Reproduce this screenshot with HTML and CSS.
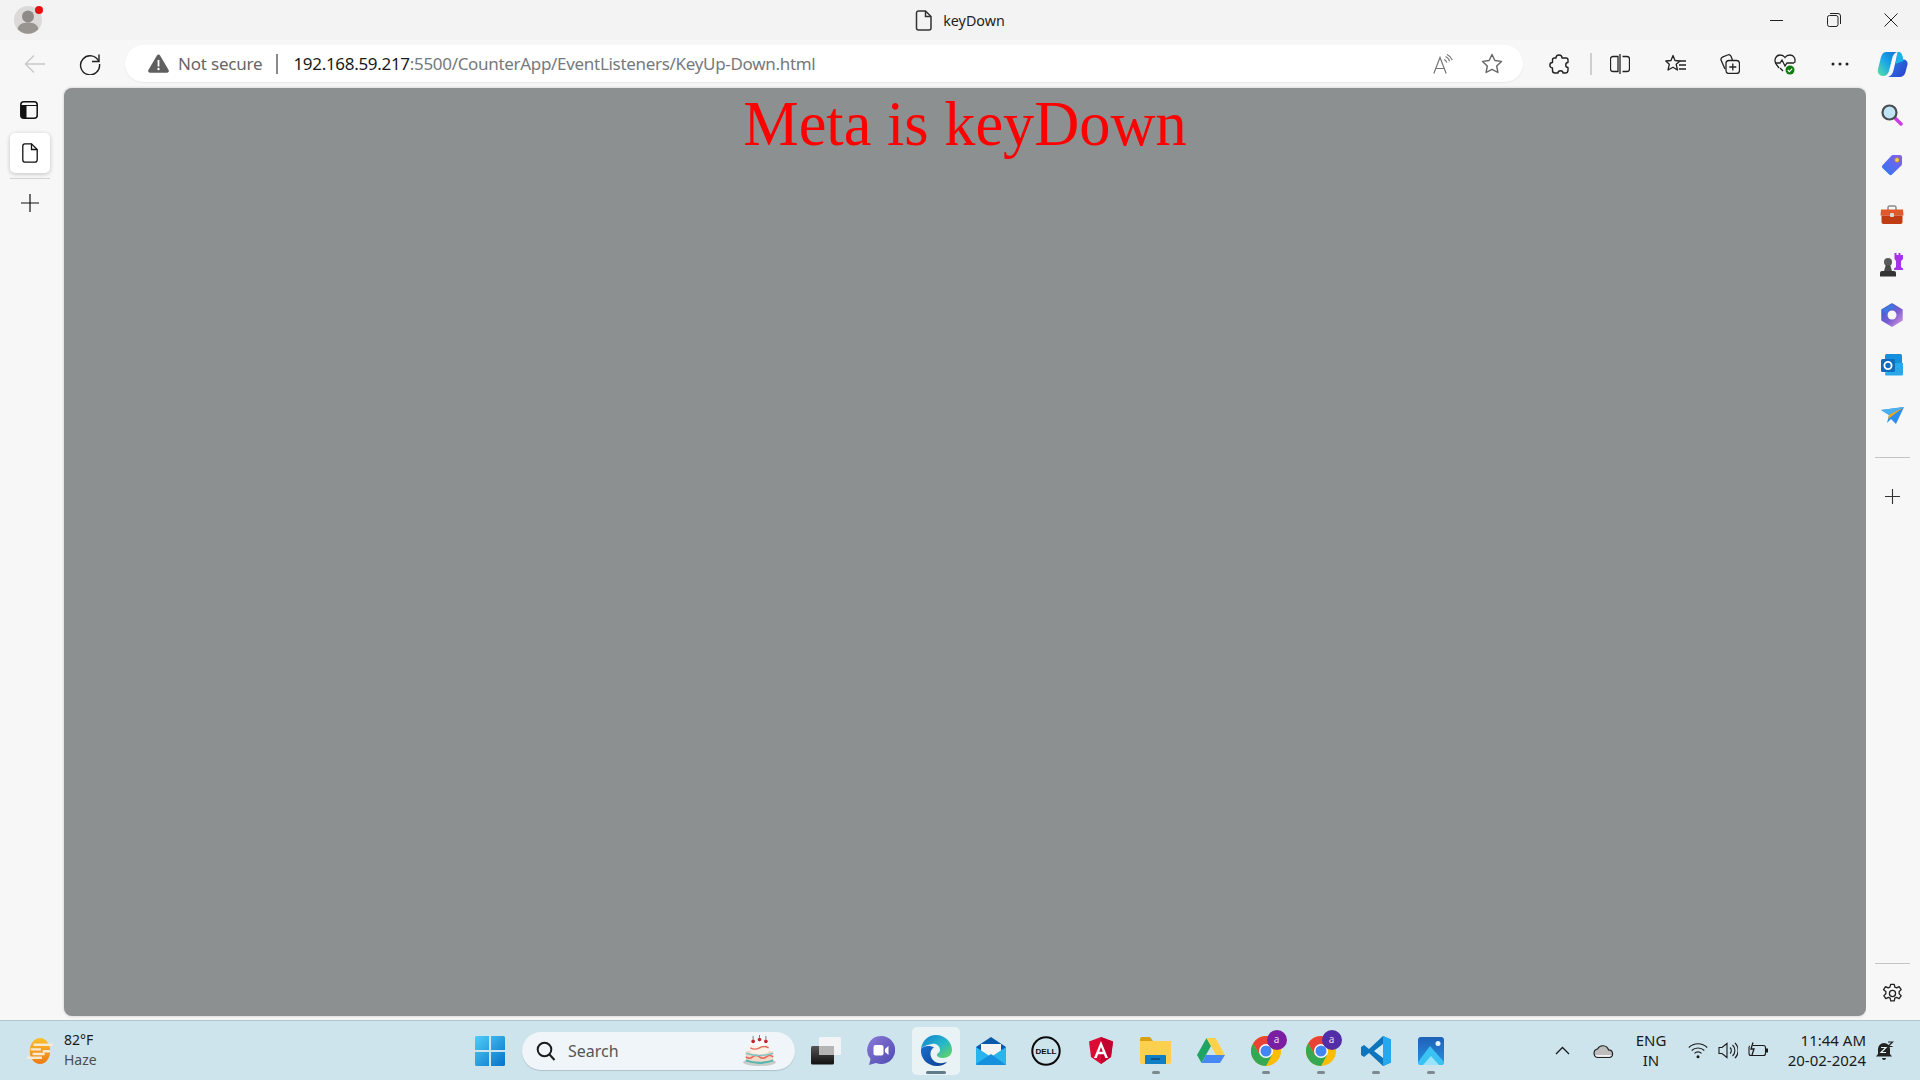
FILE: index.html
```html
<!DOCTYPE html>
<html lang="en">
<head>
<meta charset="utf-8">
<title>keyDown</title>
<link rel="stylesheet" href="styles.css">
</head>
<body>
<div class="window">
  <header class="titlebar">
    <div class="avatar">
      <svg width="28" height="28" viewBox="0 0 28 28"><circle cx="14" cy="14" r="14" fill="#dcdad8"/><circle cx="14" cy="10.500" r="6" fill="#8d8a87"/><path d="M3.500 23c1-4.500 5-6.500 10.500-6.500S23.500 18.500 24.500 23a14 14 0 0 1-21 0Z" fill="#98948f"/></svg>
      <span class="avatar-dot"></span>
    </div>
    <div class="title">
      <svg class="icon" width="18" height="21" viewBox="0 0 18 21" fill="none" stroke="#333" stroke-width="1.500"><path d="M3.500 1h7L16 6.500V18a2 2 0 0 1-2 2H3.500a2 2 0 0 1-2-2V3a2 2 0 0 1 2-2Z"/><path d="M10.500 1v5.500H16"/></svg>
      <span>keyDown</span>
    </div>
    <div class="winctl">
      <button class="winbtn"><svg width="14" height="14" viewBox="0 0 14 14" stroke="#222" fill="none"><path d="M0 7.500h13"/></svg></button>
      <button class="winbtn"><svg width="14" height="14" viewBox="0 0 14 14" stroke="#222" fill="none"><rect x=".5" y="2.500" width="10.500" height="11" rx="2"/><path d="M3 .5h8a2.500 2.500 0 0 1 2.500 2.500v8"/></svg></button>
      <button class="winbtn"><svg width="14" height="14" viewBox="0 0 14 14" stroke="#222" fill="none"><path d="M.5.5l13 13M13.500.5l-13 13"/></svg></button>
    </div>
  </header>

  <nav class="toolbar">
    <button class="tbtn"><svg width="22" height="20" viewBox="0 0 22 20" fill="none" stroke="#c9c9c9" stroke-width="1.500"><path d="M21 10H1.500M10 1.500 1.500 10l8.500 8.500"/></svg></button>
    <button class="tbtn"><svg width="22" height="22" viewBox="0 0 22 22" fill="none" stroke="#1f1f1f" stroke-width="1.400"><path d="M19.800 8.500A9.500 9.500 0 1 0 20.500 11"/><path d="M20 1.500v7h-7"/></svg></button>
    <div class="address">
      <svg class="icon" width="21" height="19" viewBox="0 0 21 19"><path d="M10.500.5a1.800 1.800 0 0 1 1.600 1L20.600 16a1.800 1.800 0 0 1-1.600 2.700H2A1.800 1.800 0 0 1 .4 16L8.900 1.500a1.800 1.800 0 0 1 1.600-1Z" fill="#5f5f5f"/><path d="M9.600 6h1.800v6.500H9.600z" fill="#fff"/><circle cx="10.500" cy="15" r="1.200" fill="#fff"/></svg>
      <span class="secure">Not secure</span>
      <span class="divider"></span>
      <span class="url"><span class="host">192.168.59.217</span>:5500/CounterApp/EventListeners/KeyUp-Down.html</span>
      <button class="tbtn addr-first"><svg width="20" height="20" viewBox="0 0 20 20" fill="none" stroke="#777" stroke-width="1.200"><path d="M.8 19.500 7 3.500l6.200 16M2.800 14.500h8.400"/><path d="M11 5.500a5 5 0 0 1 2.800 3M12.500 2.500a8.500 8.500 0 0 1 4.300 4.700M14 .5a11 11 0 0 1 5.300 5.500"/></svg></button>
      <button class="tbtn"><svg width="22" height="21" viewBox="0 0 22 21" fill="none" stroke="#666" stroke-width="1.400" stroke-linejoin="round"><path d="m11 1.500 2.900 6 6.600.9-4.800 4.600 1.200 6.500-5.900-3.200L5.100 19.500l1.200-6.500L1.500 8.400l6.600-.9Z"/></svg></button>
    </div>
    <div class="tools">
      <button class="tbtn"><svg width="20" height="20" viewBox="0 0 20 20" fill="none" stroke="#222" stroke-width="1.400" stroke-linejoin="round"><path d="M7 4c0-4 6-4 6 0h4c1.500 0 2 .8 2 2v2.500c-3 0-3 5 0 5V16c0 1.500-1 3-2.500 3H14c0-3-5-3-5 0H6c-1.500 0-2.500-1-2.500-2.500V14c-3.500 0-3.500-5.500 0-5.500V6c0-1.200 1-2 2-2Z"/></svg></button>
      <span class="tool-sep"></span>
      <button class="tbtn"><svg width="20" height="22" viewBox="0 0 20 22" fill="none" stroke="#222" stroke-width="1.300"><path d="M8 3.500H3a2.500 2.500 0 0 0-2.500 2.500v10A2.500 2.500 0 0 0 3 18.500h5ZM10 1v20M12.500 3.500H17A2.500 2.500 0 0 1 19.500 6v10a2.500 2.500 0 0 1-2.500 2.500h-4.500"/></svg></button>
      <button class="tbtn"><svg width="21" height="20" viewBox="0 0 21 20" fill="none" stroke="#222" stroke-width="1.300" stroke-linejoin="round"><path d="m8 1.500 2 5 5 .5-3.800 3.300L12.500 16 8 13.200 3 16l1.300-5.700L.8 7l5.200-.5Z"/><path d="M15 7h6M14 11h7M14 15h7"/></svg></button>
      <button class="tbtn"><svg width="20" height="20" viewBox="0 0 20 20" fill="none" stroke="#222" stroke-width="1.300"><path d="M5 15 1.200 6.500A2.500 2.500 0 0 1 2.500 3.200l5-2.200A2.500 2.500 0 0 1 11 2.200L12.500 6"/><rect x="6" y="6.500" width="13.500" height="13" rx="3"/><path d="M12.800 9.500v7M9.300 13h7"/></svg></button>
      <button class="tbtn health"><svg width="22" height="22" viewBox="0 0 22 22" fill="none"><path d="M5 15 2 11C-.500 7 2 2 6 2c2.500 0 4 1 5 2.500C12 3 13.500 2 16 2c4 0 6 4 4.500 8" stroke="#222" stroke-width="1.300"/><path d="M1 10h5l2-3 3 6 2-3h3l4 0" stroke="#222" stroke-width="1.300"/><path d="m6 15 3 3" stroke="#222" stroke-width="1.300"/><circle cx="16" cy="17" r="4.500" fill="#107c10"/><path d="m13.800 17 1.600 1.600 2.800-2.900" stroke="#fff" stroke-width="1.200"/></svg></button>
      <button class="tbtn"><svg width="18" height="4" viewBox="0 0 18 4" fill="#222"><circle cx="2" cy="2" r="1.500"/><circle cx="9" cy="2" r="1.500"/><circle cx="16" cy="2" r="1.500"/></svg></button>
      <button class="tbtn copilot"><svg width="31" height="27" viewBox="0 0 31 27"><defs><linearGradient id="cp1" x1="0" y1="1" x2="1" y2="0"><stop offset="0" stop-color="#5be3a2"/><stop offset=".5" stop-color="#1aa7e8"/><stop offset="1" stop-color="#0f6cd5"/></linearGradient><linearGradient id="cp2" x1="0" y1="0" x2="1" y2="1"><stop offset="0" stop-color="#2a8bf2"/><stop offset="1" stop-color="#2b3fc9"/></linearGradient></defs><path d="M9 1h11c-3 1-4 3-5 7l-3 12c-.8 3-3 5-6 5-3.500 0-6-3-5-7l2.500-10C4.500 4 6 1 9 1Z" fill="url(#cp1)"/><path d="M21 1c3 0 4 2 4.500 5l.5 2.500c3 0 5 2 4.500 5l-2 7.500c-.8 3.500-3 5-6 5H11c3-1 4.500-3 5.300-6l3-12.500C20 4 20 2 21 1Z" fill="url(#cp2)"/><path d="M21 1c3 0 4 2 4.500 5l.8 4-8 3 1.500-6C20 4 20 2 21 1Z" fill="#18b5e6"/></svg></button>
    </div>
  </nav>

  <div class="main">
    <aside class="left-rail">
      <button class="rail-btn"><svg class="layout-icon" width="18" height="18" viewBox="0 0 18 18"><rect x=".8" y=".8" width="16.400" height="16.400" rx="3" fill="none" stroke="#111" stroke-width="1.500"/><path d="M1 5h16v-1H1Z" fill="#111"/><path d="M1 4h5.500v13H3a2 2 0 0 1-2-2Z" fill="#111"/></svg></button>
      <button class="rail-btn active"><svg width="16" height="20" viewBox="0 0 16 20" fill="none" stroke="#111" stroke-width="1.300"><path d="M2.800.8h6.700L15.200 6.500V17a2.200 2.200 0 0 1-2.200 2.200H2.800A2.200 2.200 0 0 1 .8 17V3A2.200 2.200 0 0 1 2.800.8Z"/><path d="M9.500.8v5.700h5.700"/></svg></button>
      <span class="rail-line"></span>
      <button class="rail-btn"><svg width="18" height="18" viewBox="0 0 18 18" stroke="#111" stroke-width="1.200"><path d="M9 0v18M0 9h18"/></svg></button>
    </aside>

    <main class="content">
      <h1 class="message">Meta is keyDown</h1>
    </main>

    <aside class="right-rail">
      <button class="side-btn"><svg width="22" height="22" viewBox="0 0 22 22"><path d="m13 13 7 7" stroke="#c83ee0" stroke-width="3.500" stroke-linecap="round"/><circle cx="8.500" cy="8.500" r="7" fill="#bfe4f5" stroke="#4a4d50" stroke-width="2.200"/></svg></button>
      <button class="side-btn"><svg width="22" height="22" viewBox="0 0 22 22"><defs><linearGradient id="tag" x1="0" y1="1" x2="1" y2="0"><stop offset="0" stop-color="#2a7af0"/><stop offset="1" stop-color="#8a5cf0"/></linearGradient></defs><path d="M12 1h7a2 2 0 0 1 2 2v7a2 2 0 0 1-.6 1.400L11 20.500a2 2 0 0 1-2.800 0L1.500 14a2 2 0 0 1 0-2.800L10.600 1.600A2 2 0 0 1 12 1Z" fill="url(#tag)"/><circle cx="16" cy="6" r="2.200" fill="#f7d046" stroke="#b98a10" stroke-width=".6"/></svg></button>
      <button class="side-btn"><svg width="24" height="20" viewBox="0 0 24 20"><path d="M8 5V2.500A1.500 1.500 0 0 1 9.500 1h5A1.500 1.500 0 0 1 16 2.500V5" fill="none" stroke="#8a8a8a" stroke-width="1.500"/><path d="M1 4.500h22l.5 6H.5Z" fill="#e0592a"/><path d="M1.500 10.500h21V17a2 2 0 0 1-2 2h-17a2 2 0 0 1-2-2Z" fill="#c13c12"/><rect x="10" y="8" width="4" height="4" rx="1" fill="#d8d8d8"/></svg></button>
      <button class="side-btn"><svg width="24" height="24" viewBox="0 0 24 24"><path d="M14.500 0h2v2h2V0h2v2h2.500v4l-2 2v6l2 1.500V17H14v-1.500l2-1.500V8l-1.500-2Z" fill="#a832e8"/><circle cx="8" cy="9" r="4" fill="#5a5a5a"/><path d="M5.800 12h4.400l1.800 6H4Z" fill="#4a4a4a"/><path d="M0 20a2 2 0 0 1 2-2h12a2 2 0 0 1 2 2v3.500H0Z" fill="#333"/></svg></button>
      <button class="side-btn"><svg width="22" height="24" viewBox="0 0 22 24"><defs><linearGradient id="m3" x1="0" y1="0" x2="1" y2="1"><stop offset="0" stop-color="#2f62d8"/><stop offset=".55" stop-color="#7a5bd0"/><stop offset="1" stop-color="#d99ae0"/></linearGradient></defs><path d="M11 1 21 7v10l-10 6L1 17V7Z" fill="url(#m3)" stroke="url(#m3)" stroke-width="1.500" stroke-linejoin="round"/><circle cx="11" cy="12" r="4.500" fill="#f7f7f7"/><path d="M6.500 12 1 7l10-6 4 6.500A5 5 0 0 0 6.500 12Z" fill="#3f78e0"/></svg></button>
      <button class="side-btn"><svg width="22" height="22" viewBox="0 0 22 22"><rect x="4" y="0" width="17" height="12" rx="1.500" fill="#1490df"/><path d="M4 9h18v11a1.500 1.500 0 0 1-1.500 1.500h-15A1.500 1.500 0 0 1 4 20Z" fill="#28a8ea"/><path d="m22 9-9 6-9-6v11" fill="#50d9ff" opacity=".6"/><rect x="0" y="5" width="14" height="13" rx="1.500" fill="#0f6cbd"/><circle cx="7" cy="11.500" r="3.600" fill="none" stroke="#fff" stroke-width="1.800"/></svg></button>
      <button class="side-btn"><svg width="23" height="17" viewBox="0 0 23 17"><path d="M0 3 23 0 15 17 10 12 6 16 8 8Z" fill="#2a8ff0"/><path d="M0 3 23 0 8 8Z" fill="#4ab0f5"/><path d="M8 8 23 0 7 12l-1 4Z" fill="#f0a818"/></svg></button>
      <span class="side-line"></span>
      <button class="side-btn plus-btn"><svg width="15" height="15" viewBox="0 0 15 15" stroke="#333" stroke-width="1.100"><path d="M7.500 0v15M0 7.500h15"/></svg></button>
      <span class="side-line bottom"></span>
      <button class="side-btn"><svg width="21" height="21" viewBox="0 0 24 24" fill="none" stroke="#222" stroke-width="1.500" stroke-linejoin="round"><circle cx="12" cy="12" r="3.500"/><path d="M10 1.500h4l.7 3.200 2 .9 2.900-1.500 2.300 3.500-2.300 2.200v2.400l2.300 2.200-2.300 3.500-2.900-1.500-2 .9-.7 3.200h-4l-.7-3.200-2-.9-2.900 1.500-2.300-3.500 2.300-2.200v-2.400L1.800 7.600l2.300-3.500 2.900 1.500 2-.9Z"/></svg></button>
    </aside>
  </div>

  <footer class="taskbar">
    <div class="weather">
      <svg width="28" height="26" viewBox="0 0 28 28"><defs><linearGradient id="sun" x1="0" y1="0" x2="0" y2="1"><stop offset="0" stop-color="#f9c02c"/><stop offset="1" stop-color="#ee7a12"/></linearGradient></defs><ellipse cx="14" cy="14" rx="11" ry="14" fill="url(#sun)"/><path d="M7 6h21v2.500H7ZM4 11h11v2.500H4ZM17 13h8v2.500h-8ZM6 16h13v2.500H6ZM0 20h16v2.500H0Z" fill="#f6ead2"/></svg>
      <div class="weather-text"><span class="temp">82°F</span><span class="cond">Haze</span></div>
    </div>
    <div class="dock">
      <button class="dock-btn"><svg width="30" height="30" viewBox="0 0 30 30"><defs><linearGradient id="win" x1="0" y1="0" x2="1" y2="1"><stop offset="0" stop-color="#4fcdf7"/><stop offset="1" stop-color="#0672c9"/></linearGradient></defs><path d="M1.500 0H14v14H0V1.500A1.500 1.500 0 0 1 1.500 0ZM16 0h12.500A1.500 1.500 0 0 1 30 1.500V14H16ZM0 16h14v14H1.500A1.500 1.500 0 0 1 0 28.500ZM16 16h14v12.500a1.500 1.500 0 0 1-1.500 1.500H16Z" fill="url(#win)"/></svg></button>
      <div class="search">
        <svg width="20" height="20" viewBox="0 0 20 20" fill="none" stroke="#1c1c1c" stroke-width="2"><circle cx="8.500" cy="8.500" r="6.800"/><path d="m13.500 13.500 5 5.500"/></svg>
        <span class="search-text">Search</span>
        <svg class="cake" width="37" height="31" viewBox="0 0 38 34"><ellipse cx="19" cy="30" rx="18" ry="4" fill="#c8cdca"/><path d="M4 19c0-3 30-3 30 0v9c0 5-30 5-30 0Z" fill="#f1d9c8"/><path d="M4 24q3.700 3 7.500 0t7.500 0 7.500 0 7.500 0" fill="none" stroke="#e86a5a" stroke-width="1.800"/><path d="M4 28q15 5 30 0" fill="none" stroke="#5bb6b3" stroke-width="2.500"/><path d="M4 20q15 5 30 0" fill="none" stroke="#7cc6c4" stroke-width="1.500"/><path d="M9 9c0-3 20-3 20 0v9c0 4-20 4-20 0Z" fill="#fbf1e6"/><path d="M9 14q5 3 10 0t10 0" fill="none" stroke="#e86a5a" stroke-width="1.600"/><ellipse cx="19" cy="9" rx="10" ry="3" fill="#fff"/><circle cx="12" cy="7" r="2" fill="#c0272d"/><circle cx="19" cy="5" r="2" fill="#c0272d"/><circle cx="26" cy="7" r="2" fill="#c0272d"/><path d="M12 5V1M19 3V0M26 5V1" stroke="#555" stroke-width=".8"/></svg>
      </div>
      <button class="dock-btn"><svg width="30" height="28" viewBox="0 0 30 28"><defs><linearGradient id="tvb" x1="0" y1="0" x2="0" y2="1"><stop offset="0" stop-color="#555"/><stop offset="1" stop-color="#111"/></linearGradient></defs><rect x="0" y="9" width="23" height="18.500" rx="1.500" fill="url(#tvb)"/><rect x="8" y="0" width="22" height="18" rx="1.500" fill="#f4f4f4" opacity=".92"/><rect x="8" y="9" width="15" height="9" fill="#b5b5b5"/></svg></button>
      <button class="dock-btn"><svg width="29" height="29" viewBox="0 0 29 29"><defs><linearGradient id="chat" x1="0" y1="0" x2="1" y2="1"><stop offset="0" stop-color="#8a78d8"/><stop offset="1" stop-color="#4e4bb0"/></linearGradient></defs><path d="M15 0a14 14 0 1 1-5 27L3 29l1.500-6A14 14 0 0 1 15 0Z" fill="url(#chat)"/><rect x="7.500" y="9" width="10" height="10.500" rx="2" fill="#fff"/><path d="m19 13 3.500-3v9l-3.500-3Z" fill="#fff"/></svg></button>
      <button class="dock-btn current"><svg width="32" height="31" viewBox="0 0 32 31"><defs><linearGradient id="eg1" x1="0" y1="0" x2="1" y2="1"><stop offset="0" stop-color="#0f7fd0"/><stop offset=".55" stop-color="#27b8c8"/><stop offset="1" stop-color="#6cd84e"/></linearGradient><linearGradient id="eg2" x1="0" y1="0" x2="1" y2="1"><stop offset="0" stop-color="#1b6fd0"/><stop offset="1" stop-color="#0d3e8e"/></linearGradient></defs><path d="M1 14C2 6 8 0 16 0c9 0 16 7 16 15 0 5-4 8-9 8-3 0-6-1-6-3 0-2 3-2 3-5 0-4-4-7-8-6-6 1-10 3-11 5Z" fill="url(#eg1)"/><path d="M1 14C0 23 7 31 17 31c4 0 8-1.500 10-4-5 2-11 1.500-14-2-3.500-4-3.500-10 1-12.500C9 10 3 11 1 14Z" fill="url(#eg2)"/></svg><span class="run wide"></span></button>
      <button class="dock-btn"><svg width="30" height="28" viewBox="0 0 30 28"><path d="M15 0 30 10v16a2 2 0 0 1-2 2H2a2 2 0 0 1-2-2V10Z" fill="#0b5aa8"/><path d="M5 7h20v10L15 22 5 17Z" fill="#f4f4f4"/><path d="M0 10 15 20l15-10v17a1 1 0 0 1-1 1H1a1 1 0 0 1-1-1Z" fill="#2ab4ee"/><path d="M0 27 15 17l15 11H1Z" fill="#1490df"/></svg></button>
      <button class="dock-btn"><svg width="30" height="30" viewBox="0 0 30 30"><circle cx="15" cy="15" r="13.700" fill="none" stroke="#0a0a0a" stroke-width="2"/><text class="dell" x="15" y="18" text-anchor="middle">DELL</text></svg></button>
      <button class="dock-btn"><svg width="24" height="27" viewBox="0 0 24 27"><path d="M12 0 24 4.500 22 20 12 27 2 20 0 4.500Z" fill="#dd0a35"/><path d="M12 0 24 4.500 22 20 12 27Z" fill="#c2002f"/><path d="M12 4 5 21h2.700l1.400-3.700h5.800l1.400 3.700H19ZM10.200 14.800 12 10l1.800 4.800Z" fill="#fff"/></svg></button>
      <button class="dock-btn"><svg width="31" height="27" viewBox="0 0 31 27"><path d="M0 2a2 2 0 0 1 2-2h8l3 4h18v3H0Z" fill="#d8a012"/><path d="M0 4h31v21a2 2 0 0 1-2 2H2a2 2 0 0 1-2-2Z" fill="#fcd04f"/><path d="M6 18h19a1 1 0 0 1 1 1v8H5v-8a1 1 0 0 1 1-1Z" fill="#0f7ec4"/><path d="M11 22h9" stroke="#0a3f6b" stroke-width="1.300"/></svg><span class="run"></span></button>
      <button class="dock-btn"><svg width="28" height="26" viewBox="0 0 28 26"><path d="M9.500 0 0 17l4.500 8L14 8Z" fill="#1fa463"/><path d="M9.500 0h9l9.500 17h-9Z" fill="#ffd04b"/><path d="M4.500 25h18.500l5-8H9Z" fill="#4688f4"/></svg></button>
      <button class="dock-btn chrome-btn"><svg width="30" height="30" viewBox="0 0 30 30"><circle cx="15" cy="15" r="15" fill="#fbbc04"/><path d="M15 0A15 15 0 0 0 2 7.500L9 19l6-9h13A15 15 0 0 0 15 0Z" fill="#ea4335"/><path d="M2 7.500A15 15 0 0 0 15 30l6-11-12 0Z" fill="#34a853"/><circle cx="15" cy="15" r="7" fill="#fff"/><circle cx="15" cy="15" r="5.500" fill="#4285f4"/></svg><span class="badge a">a</span><span class="run"></span></button>
      <button class="dock-btn chrome-btn"><svg width="30" height="30" viewBox="0 0 30 30"><circle cx="15" cy="15" r="15" fill="#fbbc04"/><path d="M15 0A15 15 0 0 0 2 7.500L9 19l6-9h13A15 15 0 0 0 15 0Z" fill="#ea4335"/><path d="M2 7.500A15 15 0 0 0 15 30l6-11-12 0Z" fill="#34a853"/><circle cx="15" cy="15" r="7" fill="#fff"/><circle cx="15" cy="15" r="5.500" fill="#4285f4"/></svg><span class="badge b">a</span><span class="run"></span></button>
      <button class="dock-btn"><svg width="30" height="30" viewBox="0 0 30 30"><path d="M22 0 30 3.500v23L22 30 8 17 3 21 0 19v-8l3-2 5 4Z" fill="#0e75bd"/><path d="M22 0 30 3.500v23L22 30Z" fill="#23a9f2"/><path d="M22 8v14l-9-7Z" fill="#d6ecf5"/></svg><span class="run"></span></button>
      <button class="dock-btn"><svg width="26" height="28" viewBox="0 0 26 28"><defs><linearGradient id="ph" x1="0" y1="0" x2="0" y2="1"><stop offset="0" stop-color="#1c62b8"/><stop offset="1" stop-color="#2b8fe0"/></linearGradient></defs><rect width="26" height="28" rx="3" fill="url(#ph)"/><circle cx="20" cy="6.500" r="2.500" fill="#eaf4fb"/><path d="M0 25 12 9l14 16v0a3 3 0 0 1-3 3H3a3 3 0 0 1-3-3Z" fill="#3ac2f2"/><path d="M5 28l8-9 8 9Z" fill="#9be3fa"/></svg><span class="run"></span></button>
    </div>
    <div class="tray">
      <svg class="tray-chev" width="15" height="9" viewBox="0 0 15 9" fill="none" stroke="#1a1a1a" stroke-width="1.300"><path d="M1 8l6.500-6.500L14 8"/></svg>
      <svg class="tray-cloud" width="21" height="14" viewBox="0 0 21 14"><path d="M5 13.500a4.300 4.300 0 0 1-.5-8.500 6 6 0 0 1 11 .8 3.900 3.900 0 0 1 1 7.700Z" fill="#bdbdbd" stroke="#222" stroke-width="1.200"/><path d="M2 11h17l-2 1.800H4Z" fill="#f2f2f2"/></svg>
      <div class="lang"><span>ENG</span><span>IN</span></div>
      <div class="tray-icons">
        <svg width="20" height="17" viewBox="0 0 20 17" fill="none" stroke="#1a1a1a" stroke-width="1.100"><path d="M.8 5.500a13 13 0 0 1 18.400 0M3.700 8.500a9 9 0 0 1 12.600 0M6.500 11.300a5 5 0 0 1 7 0"/><circle cx="10" cy="14.800" r="1.500" fill="#1a1a1a" stroke="none"/></svg>
        <svg width="20" height="17" viewBox="0 0 20 17" fill="none" stroke="#1a1a1a" stroke-width="1.100"><path d="M1 5.500h3L9 1.500v14L4 11.500H1Z"/><path d="M12 5.500a4 4 0 0 1 0 6M14.500 3a7.500 7.500 0 0 1 0 11M17 .8a11 11 0 0 1 0 15.400"/></svg>
        <svg width="20" height="17" viewBox="0 0 20 17" fill="none" stroke="#1a1a1a" stroke-width="1.100"><path d="M5 3.500h10.500a2 2 0 0 1 2 2v6a2 2 0 0 1-2 2H3a2 2 0 0 1-2-2v-6a2 2 0 0 1 .8-1.600"/><path d="M18 7h1.500v3H18" fill="#1a1a1a"/><path d="M5 .5 3 7h3l-2 6" stroke-width="1.300"/></svg>
      </div>
      <div class="clock"><span>11:44 AM</span><span>20-02-2024</span></div>
      <svg class="tray-bell" width="18" height="20" viewBox="0 0 18 20"><path d="M8 2a6 6 0 0 1 6 6v5l2 2.500H0L2 13V8a6 6 0 0 1 6-6Z" fill="#222"/><path d="M6 17h4a2 2 0 0 1-4 0Z" fill="#222"/><path d="M5 6.500h5l-5 5h5" fill="none" stroke="#e6f1f5" stroke-width="1.200"/><path d="M12 1h4.500L12 5.500h4.500" fill="none" stroke="#222" stroke-width="1.200"/></svg>
    </div>
  </footer>
</div>
</body>
</html>
```

FILE: styles.css
```css
* { box-sizing: border-box; }
html, body { margin: 0; padding: 0; }
body {
  width: 1920px;
  height: 1080px;
  overflow: hidden;
  font-family: "Noto Sans", "Open Sans", sans-serif;
  color: #1a1a1a;
  background: #f7f7f7;
}
button {
  border: 0;
  padding: 0;
  background: none;
  font: inherit;
  display: flex;
  align-items: center;
  justify-content: center;
}
svg { display: block; flex: none; }

.window { display: flex; flex-direction: column; height: 1080px; }

/* Title bar */
.titlebar {
  height: 40px;
  flex: none;
  background: #f3f3f3;
  display: grid;
  grid-template-columns: 1fr auto 1fr;
  align-items: center;
}
.avatar { position: relative; width: 28px; height: 28px; margin-left: 14px; }
.avatar-dot {
  position: absolute;
  left: 21px;
  top: 0;
  width: 8px;
  height: 8px;
  border-radius: 50%;
  background: #e81010;
}
.title { display: flex; align-items: center; gap: 10px; font-size: 14.300px; color: #222; }
.winctl { display: flex; justify-content: flex-end; padding-right: 1px; }
.winbtn { width: 57px; height: 40px; }

/* Toolbar */
.toolbar {
  height: 48px;
  flex: none;
  background: #f7f7f7;
  display: flex;
  align-items: center;
  padding-left: 12px;
  gap: 9px;
}
.tbtn { width: 46px; height: 36px; flex: none; }
.address {
  width: 1398px;
  height: 37px;
  margin-left: 3px;
  margin-top: -1px;
  border-radius: 19px;
  background: #fff;
  box-shadow: 0 1px 2px rgba(0, 0, 0, .06);
  display: flex;
  align-items: center;
  padding: 0 8px 0 23px;
  font-size: 17px;
  gap: 3px;
}
.secure { margin-left: 6px; color: #666; letter-spacing: -.2px; }
.divider { width: 2px; height: 20px; background: #8a8a8a; margin: 0 12px 0 11px; }
.url { color: #76797c; white-space: nowrap; letter-spacing: -.31px; }
.host { color: #1a1a1a; }
.addr-first { margin-left: auto; }
.tools { display: flex; align-items: center; gap: 9px; margin-left: 4px; }
.tool-sep { width: 2px; height: 22px; background: #cfcfcf; margin: 0 -4px 0 -1px; }
.copilot { margin-left: -3px; }

/* Main area */
.main { display: flex; height: 932px; flex: none; }
.left-rail {
  width: 64px;
  flex: none;
  background: #f7f7f7;
  display: flex;
  flex-direction: column;
  align-items: center;
  padding: 2px 5px 0 0;
}
.rail-btn { width: 40px; height: 40px; flex: none; }
.layout-icon { margin-right: 2px; }
.rail-btn.active {
  margin-top: 3px;
  background: #fff;
  border-radius: 5px;
  box-shadow: 0 1px 4px rgba(0, 0, 0, .22);
}
.rail-line { width: 40px; height: 1px; background: #d3d3d3; margin: 5px 0 4px; }

.content {
  flex: 1;
  margin-bottom: 4px;
  background: #8c9090;
  border-radius: 8px;
  box-shadow: 0 0 3px rgba(0, 0, 0, .2);
}
.message {
  margin: 0;
  text-align: center;
  font-family: "Liberation Serif", "Times New Roman", serif;
  font-weight: 400;
  font-size: 62.400px;
  line-height: 72px;
  color: #ff0000;
}

.right-rail {
  width: 54px;
  flex: none;
  background: #f7f7f7;
  display: flex;
  flex-direction: column;
  align-items: center;
  padding: 2px 2px 2px 0;
}
.side-btn { width: 40px; height: 50px; flex: none; }
.side-line { width: 35px; height: 1px; background: #c4c4c4; margin: 17px 0 13px; flex: none; }
.side-line.bottom { margin: auto 0 4px; }

/* Taskbar */
.taskbar {
  height: 60px;
  flex: none;
  background: #cee4ec;
  border-top: 1px solid #b5c5cc;
  display: grid;
  grid-template-columns: 462px auto 1fr;
  align-items: center;
}
.weather { display: flex; align-items: center; gap: 10px; padding-left: 26px; }
.weather-text { display: flex; flex-direction: column; font-size: 14px; line-height: 20px; margin-top: -2px; }
.temp { color: #1a1a1a; }
.cond { color: #4d4d4d; }

.dock { display: flex; align-items: center; }
.dock-btn { width: 55px; height: 48px; position: relative; flex: none; }
.dock-btn.current { background: rgba(255, 255, 255, .55); border-radius: 5px; width: 48px; margin: 0 3.500px; }
.run {
  position: absolute;
  left: 50%;
  bottom: 1px;
  width: 8px;
  height: 3px;
  margin-left: -4px;
  border-radius: 2px;
  background: #7c8a90;
}
.run.wide { width: 20px; margin-left: -10px; background: #5f7c88; }
.badge {
  position: absolute;
  left: 28.500px;
  top: 3px;
  width: 20px;
  height: 20px;
  border-radius: 50%;
  font-size: 10px;
  line-height: 19px;
  text-align: center;
  color: #e8d8f0;
}
.badge.a { background: #7b1fa2; }
.badge.b { background: #512da8; }
.dell { font-size: 8px; font-weight: 700; font-family: "Liberation Sans", sans-serif; fill: #0a0a0a; }

.search {
  width: 273px;
  height: 38px;
  margin: 0 3px 0 5px;
  border-radius: 19px;
  background: #eff5f8;
  box-shadow: 0 1px 1px rgba(0, 0, 0, .15);
  display: flex;
  align-items: center;
  padding: 0 17px 0 14px;
  position: relative;
}
.search-text { margin-left: 12px; font-size: 16px; color: #555; }
.cake { margin-left: auto; }

.tray { display: flex; align-items: center; position: relative; height: 100%; padding-left: 97px; }
.tray-cloud { margin-left: 23px; }
.lang {
  width: 44px;
  margin-left: 15px;
  display: flex;
  flex-direction: column;
  align-items: center;
  font-size: 15px;
  line-height: 20px;
  margin-top: -2px;
}
.tray-icons { display: flex; gap: 10px; margin-left: 15px; }
.clock {
  width: 98px;
  display: flex;
  flex-direction: column;
  align-items: flex-end;
  font-size: 15px;
  line-height: 20px;
  margin-top: -2px;
}
.tray-bell { margin-left: 10px; }
```
